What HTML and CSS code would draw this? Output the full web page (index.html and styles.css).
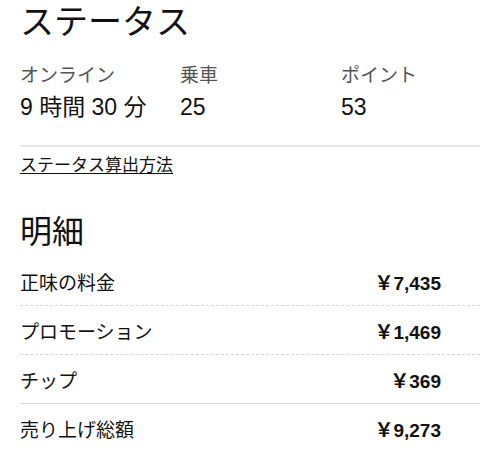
FILE: index.html
```html
<!DOCTYPE html>
<html lang="ja">
  <head>
    <meta charset="UTF-8" />
    <title>ステータス</title>
    <link rel="stylesheet" href="styles.css">
  </head>
  <body>
    <h1 class="title">ステータス</h1>

    <div class="stats">
      <div class="stat">
        <div class="stat-label">オンライン</div>
        <div class="stat-value">9 時間 30 分</div>
      </div>
      <div class="stat">
        <div class="stat-label">乗車</div>
        <div class="stat-value">25</div>
      </div>
      <div class="stat">
        <div class="stat-label">ポイント</div>
        <div class="stat-value">53</div>
      </div>
    </div>

    <div class="divider"></div>
    <a class="help-link" href="#">ステータス算出方法</a>

    <h2 class="subtitle">明細</h2>

    <div class="breakdown">
      <div class="row dashed">
        <span>正味の料金</span>
        <span class="amount">￥7,435</span>
      </div>
      <div class="row dashed">
        <span>プロモーション</span>
        <span class="amount">￥1,469</span>
      </div>
      <div class="row solid">
        <span>チップ</span>
        <span class="amount">￥369</span>
      </div>
      <div class="row">
        <span>売り上げ総額</span>
        <span class="amount">￥9,273</span>
      </div>
    </div>
  </body>
</html>
```

FILE: styles.css
```css
body {
  margin: 0;
  padding: 0 20px;
  font-family: "Liberation Sans", "Noto Sans CJK JP", sans-serif;
  color: #111;
  background: #fff;
}
.title {
  margin: 0;
  font-size: 34px;
  font-weight: 400;
  line-height: 44px;
}
.stats {
  display: grid;
  grid-template-columns: 160px 161px 1fr;
  margin-top: 20px;
}
.stat-label {
  font-size: 19px;
  color: #555;
  line-height: 24px;
}
.stat-value {
  font-size: 23px;
  line-height: 30px;
  margin-top: 4px;
}
.divider {
  margin-top: 23px;
  border-top: 2px solid #e6e6e6;
}
.help-link {
  display: inline-block;
  margin-top: 8px;
  font-size: 17px;
  line-height: 22px;
  color: #111;
  text-decoration: underline;
  text-underline-offset: 2px;
}
.subtitle {
  margin: 35px 0 0;
  font-size: 32px;
  font-weight: 400;
  line-height: 40px;
}
.breakdown {
  margin-top: 5px;
}
.row {
  display: flex;
  justify-content: space-between;
  align-items: center;
  height: 48px;
  font-size: 19px;
  padding-right: 39px;
}
.row.dashed {
  border-bottom: 1px dashed #d6d6d6;
}
.row.solid {
  border-bottom: 1px solid #dcdcdc;
}
.amount {
  font-weight: 700;
}
```
